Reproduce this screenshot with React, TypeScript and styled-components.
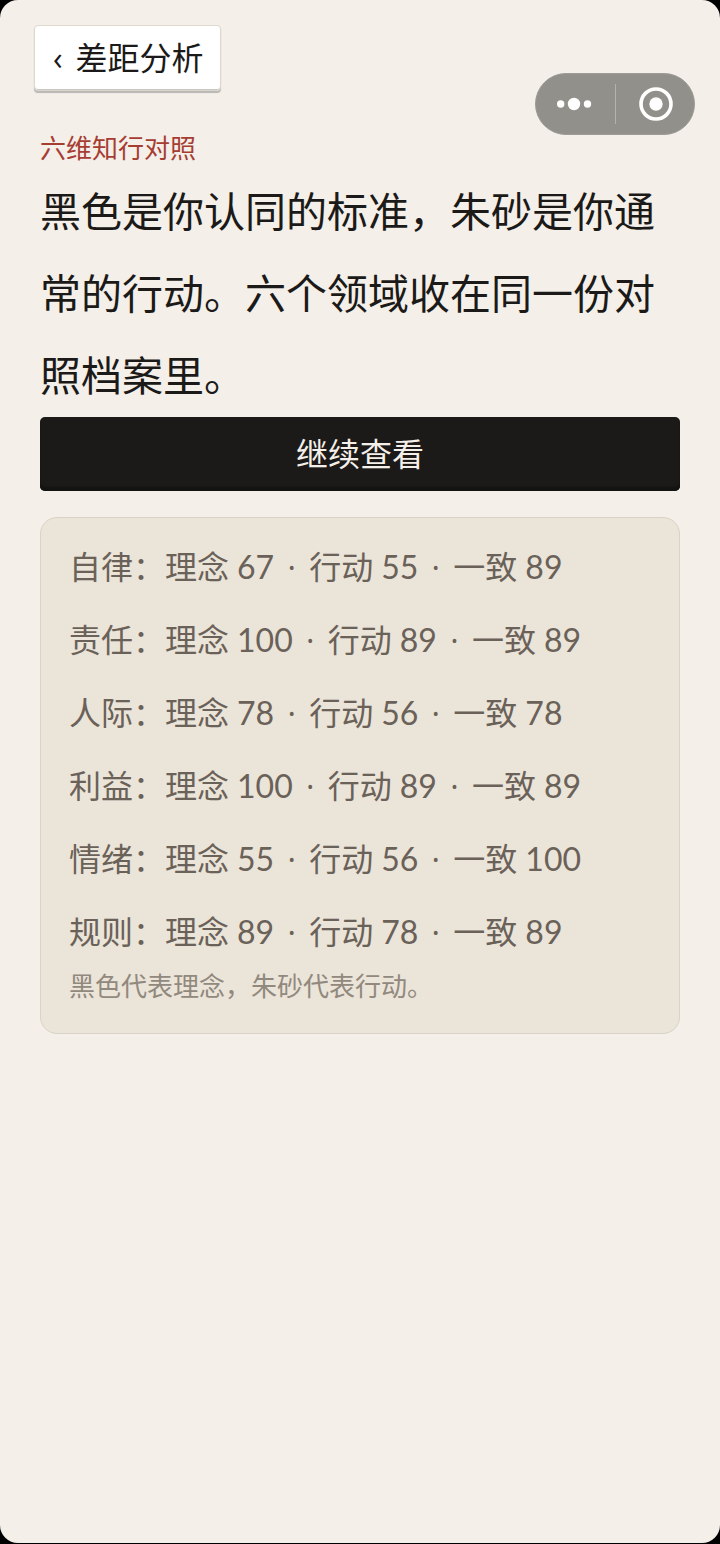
import React from "react";
import styled, { createGlobalStyle } from "styled-components";

const GlobalStyle = createGlobalStyle`
  * { box-sizing: border-box; }
  body {
    margin: 0;
    background: #000;
    font-family: Lato, "Noto Sans CJK SC", sans-serif;
  }
`;

const Screen = styled.div`
  position: relative;
  display: flex;
  flex-direction: column;
  min-height: calc(100vh - 1px);
  padding: 25px 40px 40px;
  border-radius: 18px;
  background: #f4efe8;
  color: #1b1a18;
`;

const BackButton = styled.button`
  display: flex;
  align-items: center;
  align-self: flex-start;
  gap: 13px;
  height: 66px;
  margin: 0 0 0 -6px;
  padding: 0 16px 0 18px;
  border: 1px solid #dcd8ce;
  border-radius: 4px;
  background: #fff;
  box-shadow: inset 0 -1px 0 #c8c6c3, 0 2px 1px #b9b7b4;
  color: #1b1a18;
  font: inherit;
  font-size: 32px;
  line-height: 48px;
`;

const Chevron = styled.span`
  font-family: "Open Sans", sans-serif;
`;

const Capsule = styled.div`
  position: absolute;
  top: 73px;
  right: 25px;
  display: flex;
  align-items: center;
  width: 160px;
  height: 62px;
  border: 1px solid #9c9b95;
  border-radius: 31px;
  background: #91908a;
`;

const CapsuleButton = styled.button`
  display: flex;
  flex: 1;
  align-items: center;
  justify-content: center;
  height: 100%;
  padding: 0;
  border: 0;
  background: none;
`;

const CapsuleDivider = styled.span`
  width: 1px;
  height: 40px;
  background: #b3b2ad;
`;

const Eyebrow = styled.p`
  margin: 34px 0 0;
  color: #a63d33;
  font-size: 26px;
  line-height: 46px;
`;

const Headline = styled.h1`
  margin: 0;
  font-size: 41px;
  font-weight: 400;
  line-height: 82px;
`;

const PrimaryButton = styled.button`
  height: 74px;
  margin: 0;
  padding: 0 0 4px;
  border: 0;
  border-radius: 5px;
  background: #1b1a18;
  box-shadow: inset 0 -4px 2px #131411;
  color: #f4efe8;
  font: inherit;
  font-size: 32px;
`;

const Card = styled.section`
  margin-top: 26px;
  padding: 12px 28px 29px;
  border: 1px solid #d9d2c8;
  border-radius: 17px;
  background: #ebe4d9;
`;

const ScoreList = styled.ul`
  margin: 0;
  padding: 0;
  list-style: none;
`;

const ScoreRow = styled.li`
  display: flex;
  color: #6a6158;
  font-size: 32px;
  line-height: 73px;
  white-space: nowrap;
`;

const Score = styled.span`
  display: flex;
  gap: 8px;
`;

const Dot = styled.span`
  width: 35px;
  font-family: "Open Sans", sans-serif;
  text-align: center;
`;

const Note = styled.p`
  margin: 0;
  color: #91897d;
  font-size: 26px;
  line-height: 36px;
`;

const scores = [
  { name: "自律", idea: 67, action: 55, match: 89 },
  { name: "责任", idea: 100, action: 89, match: 89 },
  { name: "人际", idea: 78, action: 56, match: 78 },
  { name: "利益", idea: 100, action: 89, match: 89 },
  { name: "情绪", idea: 55, action: 56, match: 100 },
  { name: "规则", idea: 89, action: 78, match: 89 },
];

function Measure({ label, value }: { label: string; value: number }) {
  return (
    <Score>
      <span>{label}</span>
      <span>{value}</span>
    </Score>
  );
}

export default function App() {
  return (
    <>
      <GlobalStyle />
      <Screen lang="zh-CN">
        <BackButton type="button">
          <Chevron>‹</Chevron>
          <span>差距分析</span>
        </BackButton>
        <Capsule>
          <CapsuleButton type="button" aria-label="更多">
            <svg width="36" height="14" viewBox="0 0 36 14" fill="#fff">
              <circle cx="3.7" cy="7" r="3.7" />
              <circle cx="17" cy="7" r="6.2" />
              <circle cx="30.5" cy="7" r="3.7" />
            </svg>
          </CapsuleButton>
          <CapsuleDivider />
          <CapsuleButton type="button" aria-label="关闭">
            <svg width="36" height="34" viewBox="0 0 36 34">
              <circle cx="19" cy="17" r="15" fill="none" stroke="#fff" strokeWidth="3.6" />
              <circle cx="19" cy="17" r="6.7" fill="#fff" />
            </svg>
          </CapsuleButton>
        </Capsule>
        <Eyebrow>六维知行对照</Eyebrow>
        <Headline>黑色是你认同的标准，朱砂是你通常的行动。六个领域收在同一份对照档案里。</Headline>
        <PrimaryButton type="button">继续查看</PrimaryButton>
        <Card>
          <ScoreList>
            {scores.map((s) => (
              <ScoreRow key={s.name}>
                <span>{s.name}：</span>
                <Measure label="理念" value={s.idea} />
                <Dot>·</Dot>
                <Measure label="行动" value={s.action} />
                <Dot>·</Dot>
                <Measure label="一致" value={s.match} />
              </ScoreRow>
            ))}
          </ScoreList>
          <Note>黑色代表理念，朱砂代表行动。</Note>
        </Card>
      </Screen>
    </>
  );
}
